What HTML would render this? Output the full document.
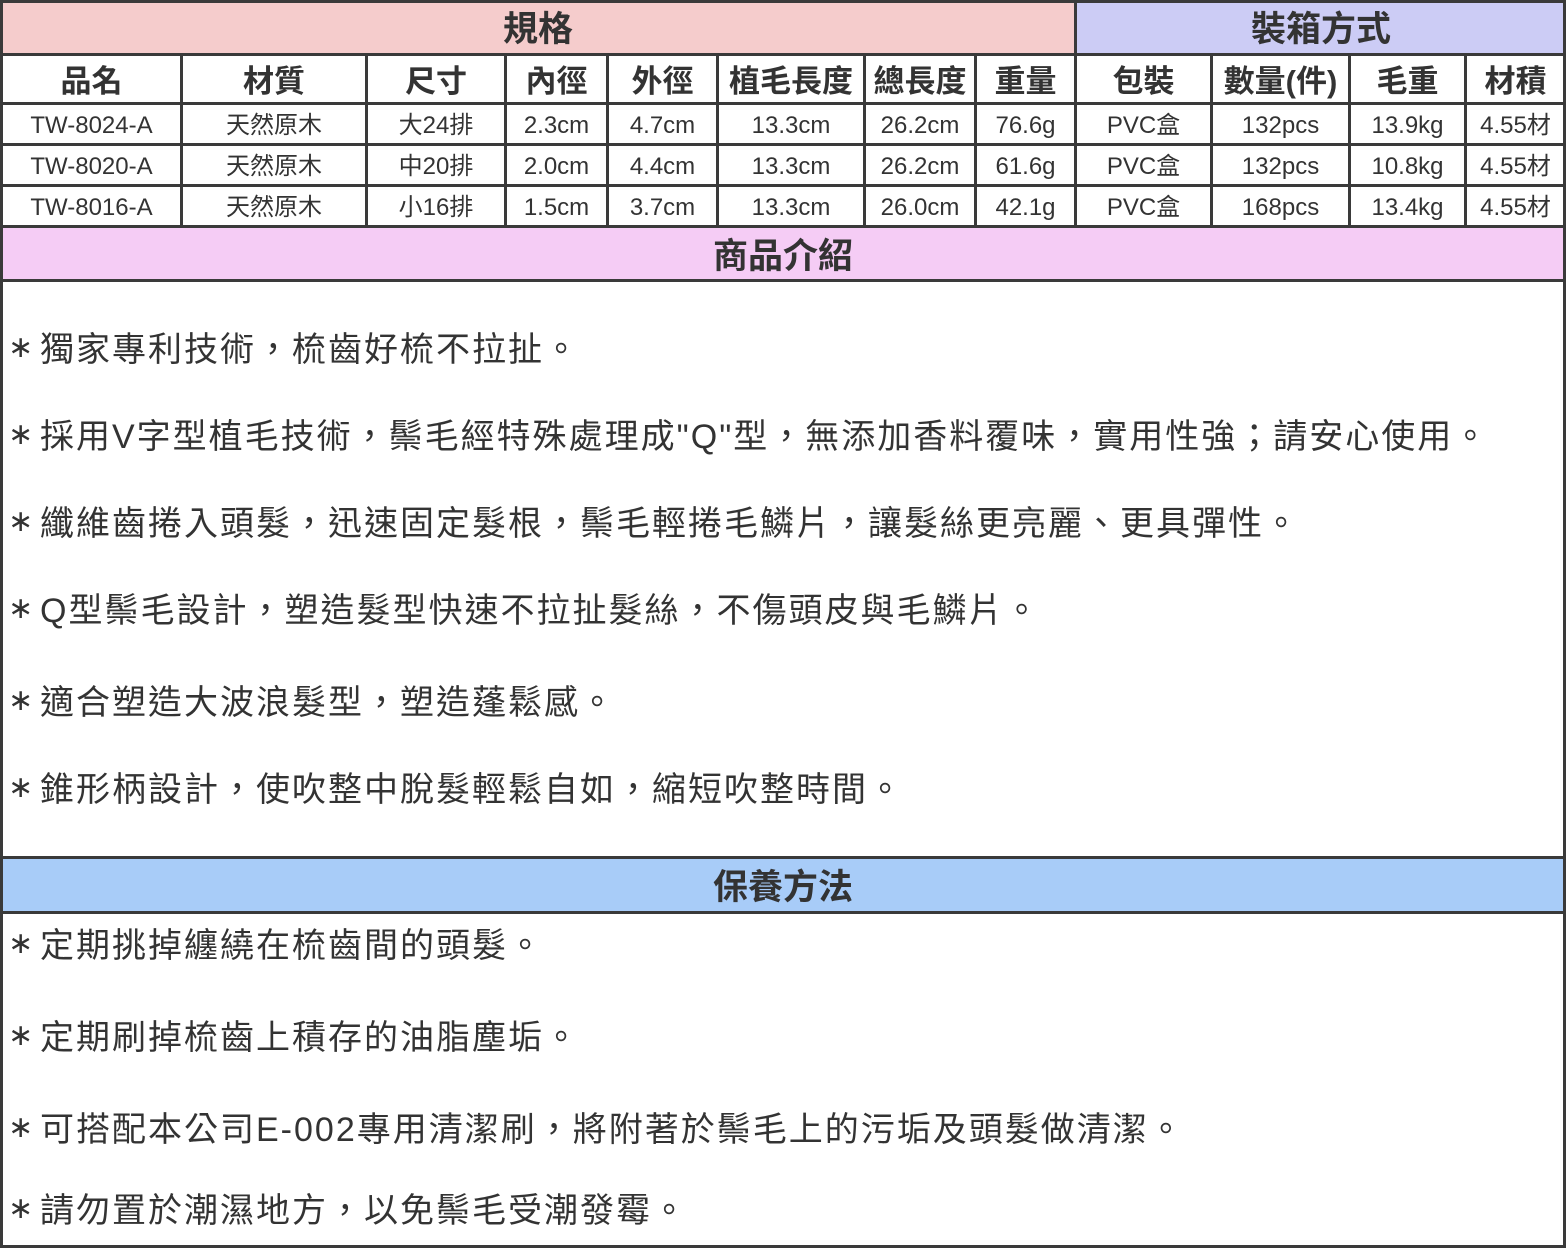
<!DOCTYPE html>
<html><head><meta charset="utf-8"><style>
*{margin:0;padding:0;box-sizing:border-box}
body{width:1568px;height:1248px;position:relative;background:#fff;font-family:"Liberation Sans","Noto Sans CJK TC",sans-serif;color:#333;overflow:hidden}
.c{position:absolute;display:flex;align-items:center;justify-content:center;white-space:nowrap}
.h{font-weight:bold;font-size:31px;line-height:31px;padding-top:3px}
.t{font-weight:bold;font-size:35px;line-height:35px;padding-top:3px}
.d{font-size:24px;line-height:24px}
.d span{display:inline-block;line-height:24px;height:30px;padding-top:5px}
.l{position:absolute;background:#3a3a3a}
.p{position:absolute;left:8px;font-size:34px;white-space:nowrap;line-height:40px;letter-spacing:2px}
.s{font-family:"DejaVu Sans",sans-serif;font-size:30px;display:inline-block;width:32px;letter-spacing:0;position:relative;top:-4px}
</style></head><body>
<div class="c t" style="left:0;top:0;width:1076px;height:55px;background:#f5cccc">規格</div>
<div class="c t" style="left:1076px;top:0;width:490px;height:55px;background:#ccccf5">裝箱方式</div>
<div class="c t" style="left:0;top:228px;width:1566px;height:53px;background:#f5ccf5">商品介紹</div>
<div class="c t" style="left:0;top:858px;width:1566px;height:55px;background:#a8ccf8">保養方法</div>

<div class="c h" style="left:3px;top:56px;width:177px;height:47px">品名</div>
<div class="c h" style="left:183px;top:56px;width:182px;height:47px">材質</div>
<div class="c h" style="left:368px;top:56px;width:136px;height:47px">尺寸</div>
<div class="c h" style="left:507px;top:56px;width:99px;height:47px">內徑</div>
<div class="c h" style="left:609px;top:56px;width:107px;height:47px">外徑</div>
<div class="c h" style="left:719px;top:56px;width:144px;height:47px">植毛長度</div>
<div class="c h" style="left:866px;top:56px;width:108px;height:47px">總長度</div>
<div class="c h" style="left:977px;top:56px;width:97px;height:47px">重量</div>
<div class="c h" style="left:1077px;top:56px;width:133px;height:47px">包裝</div>
<div class="c h" style="left:1213px;top:56px;width:135px;height:47px">數量(件)</div>
<div class="c h" style="left:1351px;top:56px;width:113px;height:47px">毛重</div>
<div class="c h" style="left:1467px;top:56px;width:97px;height:47px">材積</div>

<div class="c d" style="left:3px;top:105px;width:177px;height:38px"><span>TW-8024-A</span></div>
<div class="c d" style="left:183px;top:105px;width:182px;height:38px"><span>天然原木</span></div>
<div class="c d" style="left:368px;top:105px;width:136px;height:38px"><span>大24排</span></div>
<div class="c d" style="left:507px;top:105px;width:99px;height:38px"><span>2.3cm</span></div>
<div class="c d" style="left:609px;top:105px;width:107px;height:38px"><span>4.7cm</span></div>
<div class="c d" style="left:719px;top:105px;width:144px;height:38px"><span>13.3cm</span></div>
<div class="c d" style="left:866px;top:105px;width:108px;height:38px"><span>26.2cm</span></div>
<div class="c d" style="left:977px;top:105px;width:97px;height:38px"><span>76.6g</span></div>
<div class="c d" style="left:1077px;top:105px;width:133px;height:38px"><span>PVC盒</span></div>
<div class="c d" style="left:1213px;top:105px;width:135px;height:38px"><span>132pcs</span></div>
<div class="c d" style="left:1351px;top:105px;width:113px;height:38px"><span>13.9kg</span></div>
<div class="c d" style="left:1467px;top:105px;width:97px;height:38px"><span>4.55材</span></div>

<div class="c d" style="left:3px;top:146px;width:177px;height:38px"><span>TW-8020-A</span></div>
<div class="c d" style="left:183px;top:146px;width:182px;height:38px"><span>天然原木</span></div>
<div class="c d" style="left:368px;top:146px;width:136px;height:38px"><span>中20排</span></div>
<div class="c d" style="left:507px;top:146px;width:99px;height:38px"><span>2.0cm</span></div>
<div class="c d" style="left:609px;top:146px;width:107px;height:38px"><span>4.4cm</span></div>
<div class="c d" style="left:719px;top:146px;width:144px;height:38px"><span>13.3cm</span></div>
<div class="c d" style="left:866px;top:146px;width:108px;height:38px"><span>26.2cm</span></div>
<div class="c d" style="left:977px;top:146px;width:97px;height:38px"><span>61.6g</span></div>
<div class="c d" style="left:1077px;top:146px;width:133px;height:38px"><span>PVC盒</span></div>
<div class="c d" style="left:1213px;top:146px;width:135px;height:38px"><span>132pcs</span></div>
<div class="c d" style="left:1351px;top:146px;width:113px;height:38px"><span>10.8kg</span></div>
<div class="c d" style="left:1467px;top:146px;width:97px;height:38px"><span>4.55材</span></div>

<div class="c d" style="left:3px;top:187px;width:177px;height:38px"><span>TW-8016-A</span></div>
<div class="c d" style="left:183px;top:187px;width:182px;height:38px"><span>天然原木</span></div>
<div class="c d" style="left:368px;top:187px;width:136px;height:38px"><span>小16排</span></div>
<div class="c d" style="left:507px;top:187px;width:99px;height:38px"><span>1.5cm</span></div>
<div class="c d" style="left:609px;top:187px;width:107px;height:38px"><span>3.7cm</span></div>
<div class="c d" style="left:719px;top:187px;width:144px;height:38px"><span>13.3cm</span></div>
<div class="c d" style="left:866px;top:187px;width:108px;height:38px"><span>26.0cm</span></div>
<div class="c d" style="left:977px;top:187px;width:97px;height:38px"><span>42.1g</span></div>
<div class="c d" style="left:1077px;top:187px;width:133px;height:38px"><span>PVC盒</span></div>
<div class="c d" style="left:1213px;top:187px;width:135px;height:38px"><span>168pcs</span></div>
<div class="c d" style="left:1351px;top:187px;width:113px;height:38px"><span>13.4kg</span></div>
<div class="c d" style="left:1467px;top:187px;width:97px;height:38px"><span>4.55材</span></div>

<div class="l" style="left:0;top:0;width:1566px;height:3px"></div>
<div class="l" style="left:0;top:53px;width:1566px;height:3px"></div>
<div class="l" style="left:0;top:102px;width:1566px;height:3px"></div>
<div class="l" style="left:0;top:143px;width:1566px;height:3px"></div>
<div class="l" style="left:0;top:184px;width:1566px;height:3px"></div>
<div class="l" style="left:0;top:225px;width:1566px;height:3px"></div>
<div class="l" style="left:0;top:279px;width:1566px;height:3px"></div>
<div class="l" style="left:0;top:856px;width:1566px;height:3px"></div>
<div class="l" style="left:0;top:911px;width:1566px;height:3px"></div>
<div class="l" style="left:0;top:1245px;width:1566px;height:3px"></div>
<div class="l" style="left:0;top:0;width:3px;height:1248px"></div>
<div class="l" style="left:1563px;top:0;width:3px;height:1248px"></div>
<div class="l" style="left:1074px;top:0;width:3px;height:228px"></div>
<div class="l" style="left:180px;top:53px;width:3px;height:175px"></div>
<div class="l" style="left:365px;top:53px;width:3px;height:175px"></div>
<div class="l" style="left:504px;top:53px;width:3px;height:175px"></div>
<div class="l" style="left:606px;top:53px;width:3px;height:175px"></div>
<div class="l" style="left:716px;top:53px;width:3px;height:175px"></div>
<div class="l" style="left:863px;top:53px;width:3px;height:175px"></div>
<div class="l" style="left:974px;top:53px;width:3px;height:175px"></div>
<div class="l" style="left:1210px;top:53px;width:3px;height:175px"></div>
<div class="l" style="left:1348px;top:53px;width:3px;height:175px"></div>
<div class="l" style="left:1464px;top:53px;width:3px;height:175px"></div>

<div class="p" style="top:330px"><span class="s">∗</span>獨家專利技術，梳齒好梳不拉扯。</div>
<div class="p" style="top:417px"><span class="s">∗</span>採用V字型植毛技術，鬃毛經特殊處理成"Q"型，無添加香料覆味，實用性強；請安心使用。</div>
<div class="p" style="top:504px"><span class="s">∗</span>纖維齒捲入頭髮，迅速固定髮根，鬃毛輕捲毛鱗片，讓髮絲更亮麗、更具彈性。</div>
<div class="p" style="top:591px"><span class="s">∗</span>Q型鬃毛設計，塑造髮型快速不拉扯髮絲，不傷頭皮與毛鱗片。</div>
<div class="p" style="top:683px"><span class="s">∗</span>適合塑造大波浪髮型，塑造蓬鬆感。</div>
<div class="p" style="top:770px"><span class="s">∗</span>錐形柄設計，使吹整中脫髮輕鬆自如，縮短吹整時間。</div>

<div class="p" style="top:926px"><span class="s">∗</span>定期挑掉纏繞在梳齒間的頭髮。</div>
<div class="p" style="top:1018px"><span class="s">∗</span>定期刷掉梳齒上積存的油脂塵垢。</div>
<div class="p" style="top:1110px"><span class="s">∗</span>可搭配本公司E-002專用清潔刷，將附著於鬃毛上的污垢及頭髮做清潔。</div>
<div class="p" style="top:1191px"><span class="s">∗</span>請勿置於潮濕地方，以免鬃毛受潮發霉。</div>
</body></html>
